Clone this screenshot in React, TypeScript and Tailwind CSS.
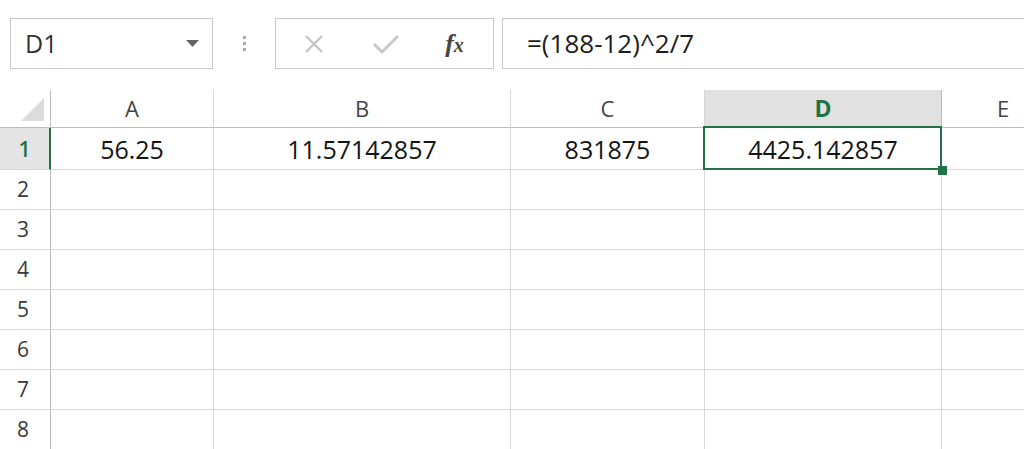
const font = { fontFamily: '"Open Sans", "Liberation Sans", sans-serif' };

const cols = [
  { key: 'A', w: 'w-[163px]' },
  { key: 'B', w: 'w-[297px]' },
  { key: 'C', w: 'w-[194px]' },
  { key: 'D', w: 'w-[237px]' },
];

const row1: Record<string, string> = {
  A: '56.25',
  B: '11.57142857',
  C: '831875',
  D: '4425.142857',
};

function Toolbar() {
  return (
    <div className="flex items-start pt-[18px] pl-[10px] h-[90px]">
      {/* name box */}
      <div className="w-[203px] h-[51px] border border-[#c9c9c9] flex items-center justify-between pl-[14px] pr-[13px]">
        <span className="text-[25px] text-[#333]">D1</span>
        <svg width="13" height="7" viewBox="0 0 13 7">
          <path d="M0 0h13L6.5 7z" fill="#666" />
        </svg>
      </div>
      {/* grip */}
      <div className="w-[62px] h-[51px] flex flex-col items-center justify-center gap-[3px]">
        <span className="w-[3px] h-[3px] bg-[#aaa]" />
        <span className="w-[3px] h-[3px] bg-[#aaa]" />
        <span className="w-[3px] h-[3px] bg-[#aaa]" />
      </div>
      {/* cancel / enter / fx */}
      <div className="w-[219px] h-[51px] border border-[#c9c9c9] flex items-center">
        <div className="w-[74px] flex justify-center pl-[2px]">
          <svg width="22" height="22" viewBox="0 0 22 22">
            <path d="M3 3l16 16M19 3L3 19" stroke="#c4c4c4" strokeWidth="2.4" />
          </svg>
        </div>
        <div className="w-[72px] flex justify-center">
          <svg width="28" height="22" viewBox="0 0 28 22">
            <path d="M2 11l8 8L26 3" stroke="#c8c8c8" strokeWidth="3" fill="none" />
          </svg>
        </div>
        <div className="flex-1 flex justify-center pr-[6px]">
          <span
            className="italic font-bold text-[#444] text-[26px] leading-none"
            style={{ fontFamily: '"Liberation Serif", "DejaVu Serif", serif' }}
          >
            f<span className="text-[20px]">x</span>
          </span>
        </div>
      </div>
      {/* formula bar */}
      <div className="ml-[8px] flex-1 h-[51px] border border-[#c9c9c9] border-r-0 flex items-center pl-[24px]">
        <span className="text-[26px] text-[#1e1e1e]">=(188-12)^2/7</span>
      </div>
    </div>
  );
}

function HeaderRow() {
  return (
    <div className="flex h-[38px]">
      <div className="w-[51px] shrink-0 border-r border-b border-[#bdbdbd] flex items-end justify-end pr-[6px] pb-[6px]">
        <svg width="23" height="23" viewBox="0 0 23 23">
          <path d="M23 0v23H0z" fill="#dcdcdc" />
        </svg>
      </div>
      {cols.map(c => (
        <div
          key={c.key}
          className={
            c.key === 'D'
              ? `${c.w} shrink-0 border-r border-b border-[#bdbdbd] bg-[#e1e1e1] flex items-center justify-center text-[23px] font-bold text-[#217346]`
              : `${c.w} shrink-0 border-r border-b border-[#d6d6d6] border-b-[#bdbdbd] flex items-center justify-center text-[22px] text-[#444]`
          }
        >
          {c.key}
        </div>
      ))}
      <div className="flex-1 border-b border-[#bdbdbd] flex items-center justify-center text-[22px] text-[#444] pl-[40px]">
        E
      </div>
    </div>
  );
}

function Row({ n }: { n: number }) {
  const sel = n === 1;
  return (
    <div className={`flex ${sel ? 'h-[42px]' : 'h-[40px]'}`}>
      <div
        className={
          sel
            ? 'w-[51px] shrink-0 bg-[#e4e4e4] border-r-[2px] border-r-[#217346] border-b border-b-[#d6d6d6] flex items-center justify-center pt-[2px] text-[21px] font-semibold text-[#217346]'
            : 'w-[51px] shrink-0 border-r border-r-[#bdbdbd] border-b border-b-[#d6d6d6] flex items-center justify-center text-[21px] text-[#3a3a3a] pr-[4px]'
        }
      >
        {n}
      </div>
      {cols.map(c => (
        <div
          key={c.key}
          className={`${c.w} shrink-0 border-r border-b border-[#d6d6d6] flex items-center justify-center pt-[3px] text-[25px] font-medium text-[#141414] relative`}
        >
          {sel && row1[c.key]}
          {sel && c.key === 'D' && (
            <>
              <div className="absolute -left-[2px] -top-[2px] -right-[1px] bottom-[-1px] border-[2px] border-[#217346]" />
              <div className="absolute z-10 -right-[6px] -bottom-[6px] w-[9px] h-[9px] bg-[#217346]" />
            </>
          )}
        </div>
      ))}
      <div className="flex-1 border-b border-[#d6d6d6]" />
    </div>
  );
}

export default function App() {
  return (
    <div className="w-[1024px] h-[449px] overflow-hidden bg-white" style={font}>
      <Toolbar />
      <HeaderRow />
      {[1, 2, 3, 4, 5, 6, 7, 8].map(n => (
        <Row key={n} n={n} />
      ))}
    </div>
  );
}
